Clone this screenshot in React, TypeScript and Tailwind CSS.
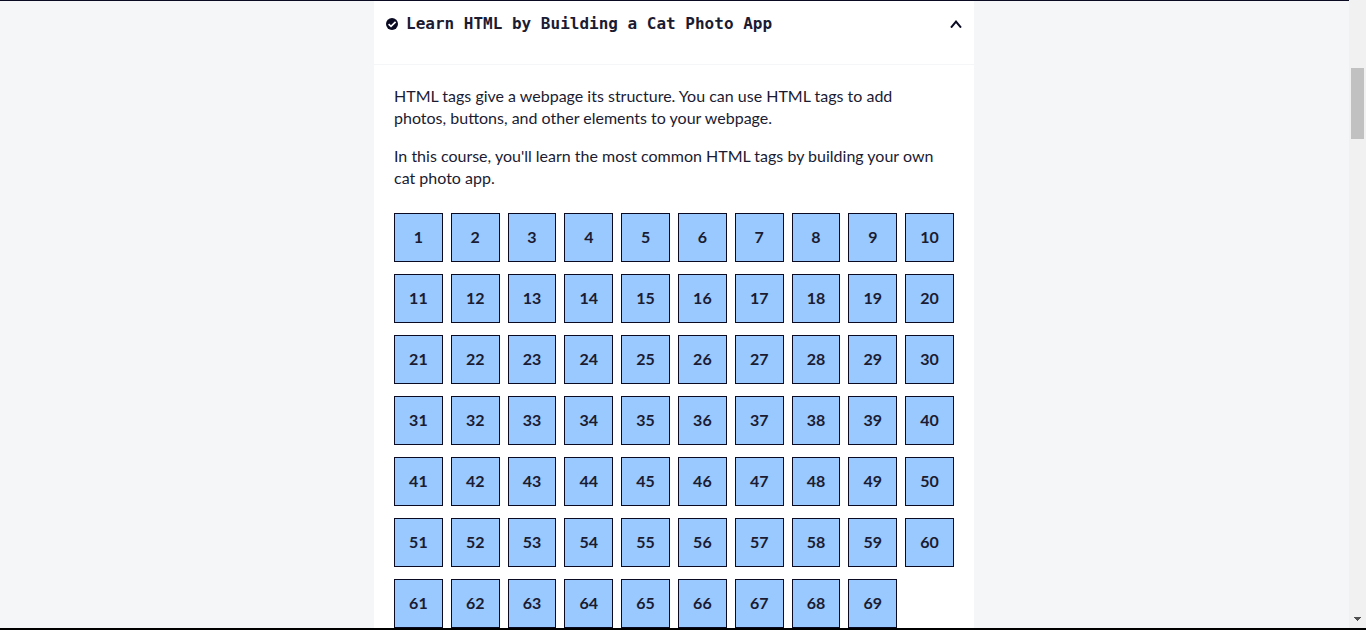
const steps = Array.from({ length: 69 }, (_, i) => i + 1);

function CheckIcon() {
  return (
    <svg viewBox="0 0 12 12" className="size-3 shrink-0" aria-hidden="true">
      <circle cx="6" cy="6" r="6" fill="#0a0a23" />
      <path d="M2.6 6.1 5 8.4 9.6 3.8" fill="none" stroke="#fff" strokeWidth="1.7" />
    </svg>
  );
}

function CaretIcon() {
  return (
    <svg viewBox="0 0 12 8" className="h-2 w-3 shrink-0" aria-hidden="true">
      <path d="M1 7.6 6 1.6 11 7.6" fill="none" stroke="#0a0a23" strokeWidth="2" />
    </svg>
  );
}

function ScrollTrack() {
  return (
    <div className="flex w-[17px] shrink-0 flex-col items-center bg-[#f1f1f1] pt-[68px] pb-[7px]" aria-hidden="true">
      <div className="h-[71px] w-[13px] bg-[#c1c1c1]" />
      <svg viewBox="0 0 7 4" className="mt-auto h-1 w-[7px]" shapeRendering="crispEdges">
        <path d="M0 0h7v1H6v1H5v1H4v1H3V3H2V2H1V1H0z" fill="#505050" />
      </svg>
    </div>
  );
}

export default function App() {
  return (
    <div className="flex min-h-screen flex-col bg-[#f5f6f7] font-['Lato',sans-serif] text-[#1b1b32]">
      <div className="flex grow">
        <main className="flex grow flex-col items-center border-t border-[#0a0a23] pr-px">
          <section className="w-full max-w-[600px] grow bg-white">
            <h3 className="border-b border-[#f5f6f7]">
              <button
                type="button"
                aria-expanded="true"
                aria-controls="course-steps"
                className="flex w-full items-center gap-2 px-3 pt-[11px] pb-7 text-left"
              >
                <CheckIcon />
                <span className="grow font-['DejaVu_Sans_Mono',monospace] text-base leading-6 font-bold">
                  Learn HTML by Building a Cat Photo App
                </span>
                <CaretIcon />
              </button>
            </h3>
            <div id="course-steps" className="px-5 pt-5">
              <div className="flex flex-col gap-4 text-base leading-[22px]">
                <p>
                  HTML tags give a webpage its structure. You can use HTML tags to add{" "}
                  <br className="hidden sm:inline" />
                  photos, buttons, and other elements to your webpage.
                </p>
                <p>
                  In this course, you'll learn the most common HTML tags by building your own{" "}
                  <br className="hidden sm:inline" />
                  cat photo app.
                </p>
              </div>
              <nav aria-label="Steps" className="mt-6">
                <ol className="grid grid-cols-10 gap-x-2 gap-y-3">
                  {steps.map((n) => (
                    <li key={n}>
                      <a
                        href={`#step-${n}`}
                        className="flex h-[49px] items-center justify-center border border-[#0a0a23] bg-[#99c9ff] pb-0.5 text-base leading-6 font-bold"
                      >
                        {n}
                      </a>
                    </li>
                  ))}
                </ol>
              </nav>
            </div>
          </section>
        </main>
        <ScrollTrack />
      </div>
      <div className="h-0.5 bg-black" />
    </div>
  );
}
